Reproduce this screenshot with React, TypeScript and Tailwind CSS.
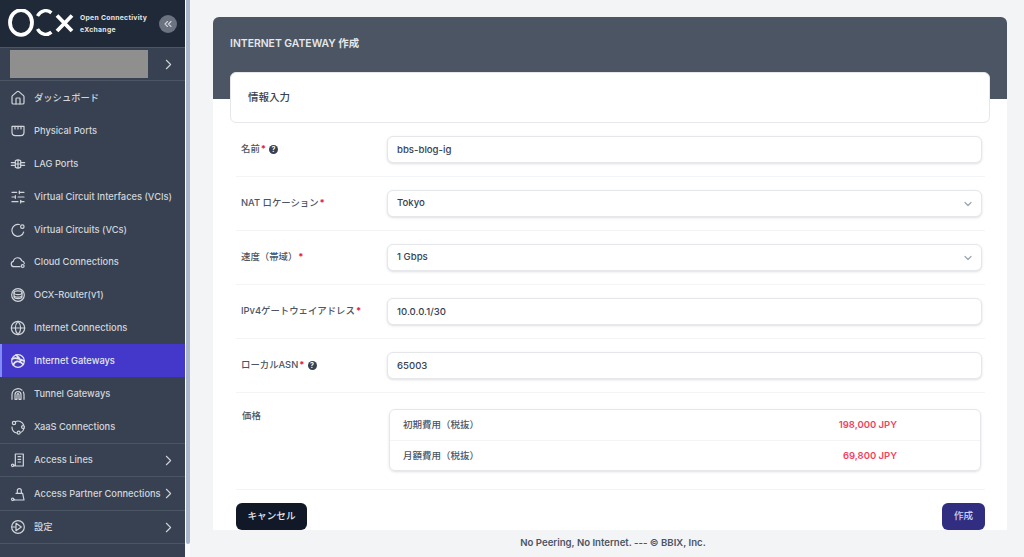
import { ChevronDown, ChevronRight, ChevronsLeft, Globe, Home, SlidersHorizontal } from "lucide-react";
import type { ReactNode } from "react";

const stroke = { fill: "none", stroke: "currentColor", strokeWidth: 1.8, strokeLinecap: "round", strokeLinejoin: "round" } as const;

const Icon = ({ children }: { children: ReactNode }) => (
  <svg viewBox="0 0 24 24" className="w-[16px] h-[16px] shrink-0" {...stroke}>
    {children}
  </svg>
);

// sidebar icons that the icon packages don't have
const PortIcon = () => (
  <Icon>
    <path d="M3 5h18v9a5 5 0 0 1-5 5H8a5 5 0 0 1-5-5z" />
    <path d="M7.500 5v4M12 5v4M16.500 5v4" />
  </Icon>
);
const LagIcon = () => (
  <Icon>
    <path d="M2 10h5M2 14h5M17 10h5M17 14h5" />
    <path d="M8 7c3-2 5-2 8 0v10c-3 2-5 2-8 0zM8 12h8M12 6v12" />
  </Icon>
);
const CircuitIcon = () => (
  <Icon>
    <path d="M14 3.800A9 9 0 1 0 20.500 15" />
    <circle cx="18.500" cy="7" r="2.600" />
  </Icon>
);
const CloudIcon = () => (
  <Icon>
    <path d="M15 19H6a4 4 0 0 1-1-7.900 6.500 6.500 0 0 1 12.600-1A4.500 4.500 0 0 1 21.500 14" />
    <circle cx="19" cy="18" r="2.200" />
  </Icon>
);
const RouterIcon = () => (
  <Icon>
    <circle cx="12" cy="12" r="9.500" />
    <ellipse cx="12" cy="8.500" rx="6" ry="2.800" />
    <path d="M6 8.500v6c0 1.600 2.700 2.800 6 2.800s6-1.200 6-2.800v-6M6 12.500c0 1.600 2.700 2.800 6 2.800s6-1.200 6-2.800" />
  </Icon>
);
const GatewayIcon = () => (
  <Icon>
    <circle cx="12" cy="12" r="9.500" />
    <path d="M3 9c5-3 11-1 18 3M5 18c2-6 8-8 15-1M9 3c3 2 6 5 7 9" strokeWidth={2.400} />
  </Icon>
);
const TunnelIcon = () => (
  <Icon>
    <path d="M3 20v-7a9 9 0 0 1 15-6.700" />
    <path d="M7.500 20v-7a4.500 4.500 0 0 1 9 0v7h-3v-7a1.500 1.500 0 0 0-3 0v7z" />
    <path d="M21 20v-7a9 9 0 0 0-1-4" />
  </Icon>
);
const XaasIcon = () => (
  <Icon>
    <path d="M8 4A9 9 0 0 1 20.500 9M21 14a9 9 0 0 1-5 6.300M10 21a9 9 0 0 1-7-9" />
    <circle cx="6" cy="6" r="2.500" />
    <circle cx="13" cy="20.500" r="2.200" />
    <circle cx="19.500" cy="12" r="2.200" />
  </Icon>
);
const BuildingIcon = () => (
  <Icon>
    <path d="M8 20V3h12v18H7" />
    <path d="M12 7h4M12 11h4M12 15h4" />
    <circle cx="4" cy="20" r="1.800" />
    <path d="M5.800 20H8" />
  </Icon>
);
const LockIcon = () => (
  <Icon>
    <path d="M9 11h10l2 10H7" />
    <path d="M11 11V7a3 3 0 0 1 6 0v4" />
    <circle cx="4" cy="20" r="1.800" />
    <path d="M5.800 20.500H7" />
  </Icon>
);
const SettingsIcon = () => (
  <Icon>
    <circle cx="12" cy="12" r="9.500" />
    <path d="M9 6.500 17 12l-8 5.500z" />
    <path d="M3 12h5" />
  </Icon>
);
const HomeIcon = () => <Home className="w-[16px] h-[16px] shrink-0" strokeWidth={1.8} />;
const SlidersIcon = () => <SlidersHorizontal className="w-[16px] h-[16px] shrink-0" strokeWidth={1.8} />;
const GlobeIcon = () => <Globe className="w-[16px] h-[16px] shrink-0" strokeWidth={1.8} />;

const navItems = [
  { label: "ダッシュボード", icon: <HomeIcon /> },
  { label: "Physical Ports", icon: <PortIcon /> },
  { label: "LAG Ports", icon: <LagIcon /> },
  { label: "Virtual Circuit Interfaces (VCIs)", icon: <SlidersIcon /> },
  { label: "Virtual Circuits (VCs)", icon: <CircuitIcon /> },
  { label: "Cloud Connections", icon: <CloudIcon /> },
  { label: "OCX-Router(v1)", icon: <RouterIcon /> },
  { label: "Internet Connections", icon: <GlobeIcon /> },
  { label: "Internet Gateways", icon: <GatewayIcon />, active: true },
  { label: "Tunnel Gateways", icon: <TunnelIcon /> },
  { label: "XaaS Connections", icon: <XaasIcon /> },
];

const navGroups = [
  { label: "Access Lines", icon: <BuildingIcon /> },
  { label: "Access Partner Connections", icon: <LockIcon /> },
  { label: "設定", icon: <SettingsIcon /> },
];

const Logo = () => (
  <svg viewBox="0 0 66 30" className="w-[66px] h-[30px] shrink-0" fill="none" stroke="white" strokeWidth="3.800">
    <ellipse cx="13" cy="13.500" rx="11" ry="12.300" />
    <path d="M43.400 3.900A10 12.500 0 0 0 29.500 7M29.500 20a10 12.500 0 0 0 13.900 3.100" strokeWidth="3.400" />
    <path d="M49 6.500 64 22M64 6.500 49 22" strokeWidth="3.800" />
  </svg>
);

const Sidebar = () => (
  <aside className="w-[190px] shrink-0 flex h-full">
    <div className="w-[185px] h-full bg-[#374151] text-[#d1d5db] overflow-hidden">
      <div className="h-[47px] bg-[#1f2937] flex items-center pl-[8px] pr-[8px]">
        <Logo />
        <div className="ml-[6px] text-[6.800px] leading-[12px] font-bold tracking-[0.300px] text-[#e5e7eb] whitespace-nowrap">
          <div>Open Connectivity</div>
          <div>eXchange</div>
        </div>
        <button className="ml-auto w-[18px] h-[18px] rounded-full bg-[#6b7280] flex items-center justify-center">
          <ChevronsLeft className="w-[12px] h-[12px] text-[#d1d5db]" strokeWidth={2.200} />
        </button>
      </div>
      <div className="h-[34px] border-y border-[#4b5563] flex items-center pl-[10px] pr-[8px] justify-between">
        <div className="w-[138px] h-[28px] bg-[#8f8f8f]" />
        <ChevronRight className="w-[17px] h-[17px]" strokeWidth={1.500} />
      </div>
      {navItems.map((item) => (
        <div
          key={item.label}
          className={
            item.active
              ? "h-[32.900px] pt-[1px] flex items-center gap-[8px] pl-[8px] bg-[#4338ca] border-l-[2px] border-[#818cf8] text-[#e5e7eb] text-[9.300px] font-medium whitespace-nowrap"
              : "h-[32.900px] pt-[1px] flex items-center gap-[8px] pl-[10px] text-[9.300px] font-medium whitespace-nowrap"
          }
        >
          {item.icon}
          <span>{item.label}</span>
        </div>
      ))}
      {navGroups.map((item) => (
        <div
          key={item.label}
          className="h-[33.500px] flex items-center gap-[8px] pl-[10px] pr-[8px] text-[9.300px] font-medium border-t border-[#4b5563] whitespace-nowrap"
        >
          {item.icon}
          <span className="flex-1 min-w-0">{item.label}</span>
          <ChevronRight className="w-[17px] h-[17px] shrink-0" strokeWidth={1.500} />
        </div>
      ))}
      <div className="border-t border-[#4b5563]" />
    </div>
    <div className="w-[5px] h-full bg-[#f9fafb] pl-[1px]">
      <div className="w-[4px] h-[544px] bg-[#aab6ca] rounded-b-sm" />
    </div>
  </aside>
);

const Required = () => <span className="text-[#e11d48] ml-[1px] font-bold">*</span>;

const Help = () => (
  <span className="ml-[3px] w-[9px] h-[9px] rounded-full bg-[#374151] text-white text-[7px] font-bold leading-[9px] text-center inline-block">
    ?
  </span>
);

const Row = ({ label, children }: { label: ReactNode; children: ReactNode }) => (
  <div className="h-[54px] flex items-center border-b border-[#f3f4f6] pl-[5px] pr-[3px]">
    <div className="w-[146px] shrink-0 text-[9.400px] font-medium text-[#4b5563] flex items-center">{label}</div>
    <div className="flex-1">{children}</div>
  </div>
);

const inputClass =
  "w-full h-[27px] border border-[#e5e7eb] rounded-md shadow-sm bg-white px-[9px] text-[9.600px] font-medium text-[#374151] outline-none flex items-center justify-between";

const TextField = ({ value }: { value: string }) => <input readOnly value={value} className={inputClass} />;

const SelectField = ({ value }: { value: string }) => (
  <div className={inputClass}>
    <span>{value}</span>
    <ChevronDown className="w-[12px] h-[12px] text-[#9ca3af] mr-[-2px]" strokeWidth={2.400} />
  </div>
);

const prices = [
  { label: "初期費用（税抜）", amount: "198,000 JPY" },
  { label: "月額費用（税抜）", amount: "69,800 JPY" },
];

export default function App() {
  return (
    <div
      className="w-[1024px] h-[557px] flex bg-[#f3f4f6] overflow-hidden"
      style={{ fontFamily: 'Inter, "Noto Sans CJK JP", sans-serif' }}
    >
      <Sidebar />
      <main className="flex-1 flex flex-col min-w-0">
        <div className="flex-1 overflow-hidden pt-[17px] pl-[23px] pr-[17px]">
          <div className="bg-white rounded-t-md h-[600px]">
            <div className="h-[82px] bg-[#4b5563] rounded-t-md pl-[17px] pt-[19px] text-[10.400px] font-semibold text-[#e5e7eb]">
              INTERNET GATEWAY 作成
            </div>
            <div className="mx-[17px] -mt-[27px] h-[51px] relative bg-white border border-[#e5e7eb] rounded-md flex items-center pl-[17px] text-[10.500px] font-medium text-[#374151]">
              情報入力
            </div>
            <div className="ml-[23px] mr-[22px]">
              <Row
                label={
                  <>
                    名前
                    <Required />
                    <Help />
                  </>
                }
              >
                <TextField value="bbs-blog-ig" />
              </Row>
              <Row
                label={
                  <>
                    NAT ロケーション
                    <Required />
                  </>
                }
              >
                <SelectField value="Tokyo" />
              </Row>
              <Row
                label={
                  <>
                    速度（帯域）
                    <Required />
                  </>
                }
              >
                <SelectField value="1 Gbps" />
              </Row>
              <Row
                label={
                  <>
                    IPv4ゲートウェイアドレス
                    <Required />
                  </>
                }
              >
                <TextField value="10.0.0.1/30" />
              </Row>
              <Row
                label={
                  <>
                    ローカルASN
                    <Required />
                    <Help />
                  </>
                }
              >
                <TextField value="65003" />
              </Row>
              <div className="h-[97px] flex border-b border-[#f3f4f6] pl-[6px] pr-[4px] pt-[16px]">
                <div className="w-[147px] shrink-0 text-[9.400px] font-medium text-[#4b5563]">価格</div>
                <div className="flex-1 h-[62px] border border-[#e5e7eb] rounded-md shadow-sm">
                  {prices.map((price, i) => (
                    <div
                      key={price.label}
                      className={
                        i === 0
                          ? "h-[31px] flex items-center justify-between pl-[13px] pr-[83px] border-b border-[#f3f4f6] text-[9.500px]"
                          : "h-[30px] flex items-center justify-between pl-[13px] pr-[83px] text-[9.500px]"
                      }
                    >
                      <span className="text-[#4b5563] font-medium">{price.label}</span>
                      <span className="text-[#f43f5e] font-semibold">{price.amount}</span>
                    </div>
                  ))}
                </div>
              </div>
              <div className="flex justify-between pt-[13px]">
                <button className="w-[71px] h-[27px] bg-[#111827] text-[#e5e7eb] rounded-md text-[9.600px] font-medium">
                  キャンセル
                </button>
                <button className="w-[43px] h-[27px] bg-[#312e81] text-[#c7d2fe] rounded-md text-[9.600px] font-medium">
                  作成
                </button>
              </div>
            </div>
          </div>
        </div>
        <footer className="h-[27px] shrink-0 flex items-center justify-center pl-[12px] text-[9.600px] font-semibold text-[#4b5563]">
          No Peering, No Internet. --- © BBIX, Inc.
        </footer>
      </main>
    </div>
  );
}
